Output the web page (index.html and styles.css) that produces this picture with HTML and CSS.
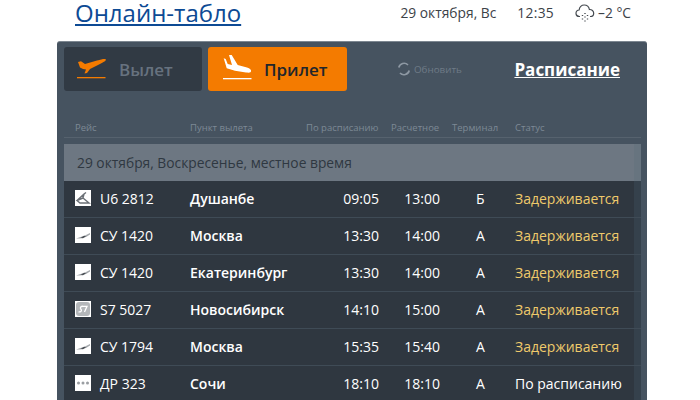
FILE: index.html
```html
<!DOCTYPE html>
<html lang="ru">
<head>
  <meta charset="UTF-8">
  <title>Онлайн-табло</title>
  <link rel="stylesheet" href="styles.css">
</head>
<body>
  <div class="top">
    <a class="page-title" href="#">Онлайн-табло</a>
    <div class="top-info">
      <span class="top-date">29 октября, Вс</span>
      <span class="top-time">12:35</span>
      <span class="top-weather">
        <svg width="20" height="20" viewBox="0 0 20 20" fill="none" stroke="#454a50" stroke-width="1.200">
          <path d="M5 13.500H4.500C2.500 13.500 1 12 1 10.200C1 8.400 2.400 7 4.100 7C4.600 4 6.600 2 9.200 2C11.800 2 13.900 3.800 14.400 6.500C16.800 6.300 18.700 8 18.700 10.200C18.700 12.200 17.200 13.500 15.300 13.500H15"/>
          <path d="M7.500 12v1M10 10v1M12.500 12v1M7.500 15.500v1M10 13.500v1M12.500 15.500v1M10 17.500v1" stroke-width="1.400"/>
        </svg>
        –2 °C
      </span>
    </div>
  </div>

  <div class="board">
    <div class="board-top">
      <a class="tab tab-off" href="#">
        <svg class="tab-icon" width="29" height="30" viewBox="0 0 29 30">
          <path fill="#f47b00" d="M1 8L4 7.300L8 10L20 6.500C26 4.500 29 4.500 29 5.800C29 7 25 9 21 11L13 15L10 19L7.500 19.500L9 15.500L6 15L3 13.500Z"/>
          <rect fill="#f47b00" x="0" y="23" width="28.500" height="1.300"/>
        </svg>
        Вылет
      </a>
      <a class="tab tab-on" href="#">
        <svg class="tab-icon" width="29" height="30" viewBox="0 0 29 30">
          <path fill="#fff" d="M0.700 4.300L2.700 5L4.700 10L9 11L6 1L8.700 1L14.700 11L24 13.500C27 14.500 28.500 15.800 28 17.500C27.500 19 25 18.700 23 18.500L12 16.700L3.700 14.300Z"/>
          <rect fill="#fff" x="0" y="24" width="28.500" height="1.300"/>
        </svg>
        Прилет
      </a>
      <a class="refresh" href="#">
        <svg width="14" height="14" viewBox="0 0 14 14" fill="none" stroke="#8d98a3" stroke-width="1.700">
          <path d="M1.800 5.500A5.400 5.400 0 0 1 11 3"/>
          <path d="M12.200 8.500A5.400 5.400 0 0 1 3 11"/>
        </svg>
        Обновить
      </a>
      <a class="schedule" href="#">Расписание</a>
    </div>

    <div class="heads">
      <span>Рейс</span>
      <span>Пункт вылета</span>
      <span>По расписанию</span>
      <span>Расчетное</span>
      <span>Терминал</span>
      <span>Статус</span>
    </div>

    <div class="day">29 октября, Воскресенье, местное время</div>

    <div class="row">
      <span class="logo">
        <svg width="16" height="16" viewBox="0 0 16 16" fill="none" stroke="#6b7076" stroke-width="1.400"><path d="M2 10.500L9 4L11 2.500M9 4L8 8L14 13L5 13L2 10.500L8 8"/></svg>
      </span>
      <span class="flight">U6 2812</span>
      <span class="dest">Душанбе</span>
      <span class="time">09:05</span>
      <span class="time">13:00</span>
      <span class="term">Б</span>
      <span class="status late">Задерживается</span>
    </div>
    <div class="row">
      <span class="logo">
        <svg width="16" height="16" viewBox="0 0 16 16"><path fill="#a3a7ab" d="M1 11.500L10 8.500L15 6V7.500L11 10L5 11.500Z"/><path fill="#4a4f55" d="M5.500 11L9 8.800L11 9.300L8 11.300Z"/></svg>
      </span>
      <span class="flight">СУ 1420</span>
      <span class="dest">Москва</span>
      <span class="time">13:30</span>
      <span class="time">14:00</span>
      <span class="term">А</span>
      <span class="status late">Задерживается</span>
    </div>
    <div class="row">
      <span class="logo">
        <svg width="16" height="16" viewBox="0 0 16 16"><path fill="#a3a7ab" d="M1 11.500L10 8.500L15 6V7.500L11 10L5 11.500Z"/><path fill="#4a4f55" d="M5.500 11L9 8.800L11 9.300L8 11.300Z"/></svg>
      </span>
      <span class="flight">СУ 1420</span>
      <span class="dest">Екатеринбург</span>
      <span class="time">13:30</span>
      <span class="time">14:00</span>
      <span class="term">А</span>
      <span class="status late">Задерживается</span>
    </div>
    <div class="row">
      <span class="logo">
        <svg width="16" height="16" viewBox="0 0 16 16"><rect x="1" y="1" width="14" height="14" rx="3" fill="#b4b7ba"/><path d="M3.500 10.800C5 11.200 7 10.500 6.300 8.800L5.500 7.500C5 6 6.500 5 8 5.300H12L9.500 11" fill="none" stroke="#fff" stroke-width="1.300"/></svg>
      </span>
      <span class="flight">S7 5027</span>
      <span class="dest">Новосибирск</span>
      <span class="time">14:10</span>
      <span class="time">15:00</span>
      <span class="term">А</span>
      <span class="status late">Задерживается</span>
    </div>
    <div class="row">
      <span class="logo">
        <svg width="16" height="16" viewBox="0 0 16 16"><path fill="#a3a7ab" d="M1 11.500L10 8.500L15 6V7.500L11 10L5 11.500Z"/><path fill="#4a4f55" d="M5.500 11L9 8.800L11 9.300L8 11.300Z"/></svg>
      </span>
      <span class="flight">СУ 1794</span>
      <span class="dest">Москва</span>
      <span class="time">15:35</span>
      <span class="time">15:40</span>
      <span class="term">А</span>
      <span class="status late">Задерживается</span>
    </div>
    <div class="row">
      <span class="logo">
        <svg width="16" height="16" viewBox="0 0 16 16" fill="#9a9ea2"><circle cx="3.500" cy="8" r="1.500"/><circle cx="8" cy="8" r="1.500"/><circle cx="12.500" cy="8" r="1.500"/></svg>
      </span>
      <span class="flight">ДР 323</span>
      <span class="dest">Сочи</span>
      <span class="time">18:10</span>
      <span class="time">18:10</span>
      <span class="term">А</span>
      <span class="status">По расписанию</span>
    </div>
  </div>
</body>
</html>
```

FILE: styles.css
```css
html, body {
  height: 400px;
  overflow: hidden;
}
body {
  margin: 0;
  background-color: #fff;
  font-family: 'Open Sans', sans-serif;
  color: #333;
}
a {
  color: inherit;
}
.top {
  display: flex;
  justify-content: space-between;
  align-items: center;
  height: 25px;
  padding: 0 69px 0 75px;
  margin-bottom: 16px;
}
.page-title {
  display: inline-block;
  font-size: 24px;
  font-weight: 500;
  line-height: 25px;
  color: #0d4a94;
}
.top-info {
  display: flex;
  align-items: center;
  font-size: 13.8px;
  color: #3c4248;
}
.top-date {
  margin-right: 21px;
}
.top-time {
  margin-right: 21px;
  letter-spacing: 0.3px;
}
.top-weather {
  display: flex;
  align-items: center;
  gap: 3px;
}
.board {
  width: 590px;
  height: 359px;
  margin-left: 57px;
  padding: 5px 6px 0 7px;
  box-sizing: border-box;
  overflow: hidden;
  background-color: #465360;
  border-radius: 3px 3px 0 0;
  border-top: 1px solid #7d8791;
}
.board-top {
  display: flex;
  align-items: center;
  height: 44px;
}
.tab {
  display: flex;
  align-items: center;
  width: 138px;
  height: 44px;
  box-sizing: border-box;
  padding-left: 13px;
  gap: 13px;
  font-size: 17px;
  font-weight: 600;
  text-decoration: none;
  border-radius: 3px;
}
.tab-off {
  background-color: #313a44;
  color: #67727f;
}
.tab-on {
  width: 139px;
  margin-left: 6px;
  padding-left: 15px;
  gap: 12px;
  background-color: #f47b00;
  color: #20262c;
}
.refresh {
  display: flex;
  align-items: center;
  gap: 3px;
  margin-left: 50px;
  font-size: 9.8px;
  color: #6f7b87;
  text-decoration: none;
}
.schedule {
  margin-left: auto;
  margin-right: 21px;
  font-size: 17px;
  font-weight: 700;
  color: #fff;
}
.heads {
  display: grid;
  grid-template-columns: 115px 116px 85px 61px 63px 1fr;
  align-items: center;
  height: 47px;
  padding-left: 11px;
  box-sizing: border-box;
  padding-top: 26px;
  font-size: 9.5px;
  color: #7d8995;
  border-bottom: 1px solid #56626e;
}
.day {
  height: 37px;
  margin-top: 6px;
  padding-left: 13px;
  line-height: 37px;
  font-size: 13.8px;
  color: #2f3841;
  background: linear-gradient(to right, #6d7782 570px, #67747f 570px);
}
.row {
  display: grid;
  grid-template-columns: 25px 90px 116px 73px 61px 75px 1fr;
  align-items: center;
  height: 37px;
  box-sizing: border-box;
  padding-left: 11px;
  padding-bottom: 2px;
  font-size: 14px;
  color: #fff;
  background: linear-gradient(to right, #2f3740 570px, #35414c 570px);
  border-bottom: 1px solid #3f4b56;
}
.logo {
  display: block;
  width: 16px;
  height: 16px;
  background-color: #fff;
}
.logo svg {
  display: block;
}
.dest {
  font-weight: 600;
}
.time {
  text-align: right;
}
.term {
  padding-left: 36px;
}
.status {
  color: #fff;
}
.late {
  color: #efca6b;
}
```
